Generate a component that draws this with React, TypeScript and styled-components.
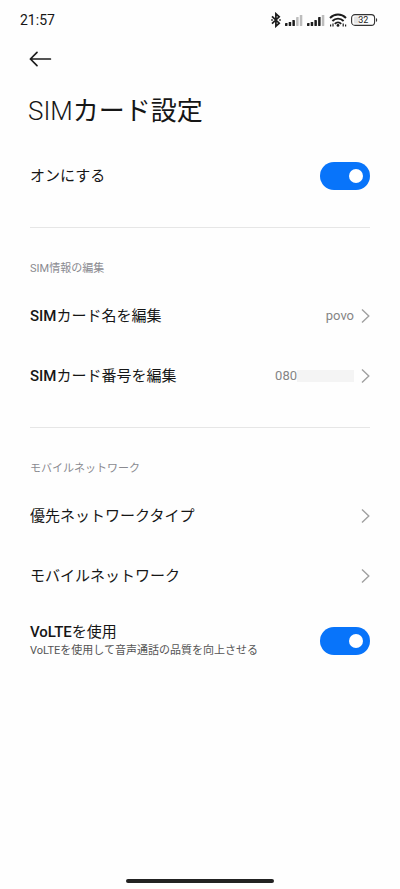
import React, { useState } from 'react';
import styled, { createGlobalStyle } from 'styled-components';

const GlobalStyle = createGlobalStyle`
  * { box-sizing: border-box; }
  body {
    margin: 0;
    background: #fefefe;
    color: #161616;
    font-family: Roboto, "Noto Sans CJK JP", sans-serif;
  }
  button { font: inherit; color: inherit; background: none; border: 0; padding: 0; cursor: pointer; }
`;

const Screen = styled.div`
  min-height: 100vh;
  display: flex;
  flex-direction: column;
`;

const StatusBar = styled.div`
  display: flex;
  align-items: center;
  justify-content: space-between;
  height: 39px;
  padding: 0 22px 0 20px;
`;

const Clock = styled.time`
  font-size: 14px;
  line-height: 20px;
`;

const StatusIcons = styled.div`
  display: flex;
  align-items: center;
  gap: 4px;
  svg { display: block; }
`;

const AppBar = styled.header`
  display: flex;
  align-items: center;
  height: 40px;
  padding: 0 28px;
`;

const BackButton = styled.button`
  display: flex;
`;

const Title = styled.h1`
  margin: 0;
  padding: 12px 28px 15px;
  font-size: 26px;
  line-height: 40px;
  font-weight: 300;
`;

const TitleKana = styled.span`
  font-weight: 400;
`;

const Section = styled.section`
  margin: 0 30px;
  padding-bottom: 21px;
  & + & {
    border-top: 1px solid #e6e6e6;
    padding-top: 31px;
  }
`;

const SectionTitle = styled.h2`
  margin: 0 0 7px;
  font-size: 11px;
  line-height: 20px;
  font-weight: 400;
  color: #8a8a90;
`;

const rowLayout = `
  display: flex;
  align-items: center;
  justify-content: space-between;
  width: 100%;
  text-align: left;
`;

const LinkRow = styled.button`
  ${rowLayout}
  height: 60px;
`;

const SwitchRow = styled.label<{ $tall?: boolean }>`
  ${rowLayout}
  height: ${(p) => (p.$tall ? 69 : 60)}px;
  cursor: pointer;
`;

const RowText = styled.span`
  display: flex;
  flex-direction: column;
`;

const RowLabel = styled.span`
  font-size: 15px;
  line-height: 20px;
`;

const Latin = styled.span`
  font-weight: 500;
`;

const RowNote = styled.span`
  font-size: 11px;
  line-height: 18px;
  color: #555;
`;

const RowEnd = styled.span`
  display: flex;
  align-items: center;
  gap: 7px;
  font-size: 13px;
  line-height: 20px;
  color: #858585;
`;

const PhoneNumber = styled.span`
  display: flex;
  align-items: center;
`;

const HiddenDigits = styled.span`
  width: 57px;
  height: 12px;
  background: #f4f4f4;
`;

const Switch = styled.input`
  appearance: none;
  flex: none;
  display: flex;
  align-items: center;
  width: 50px;
  height: 28px;
  margin: 0;
  padding: 0 7px;
  border-radius: 14px;
  background: #d8d8d8;
  cursor: pointer;
  &::before {
    content: "";
    width: 14px;
    height: 14px;
    border-radius: 50%;
    background: #fff;
  }
  &:checked {
    background: #0874fa;
    justify-content: flex-end;
  }
`;

const HomeArea = styled.div`
  display: flex;
  justify-content: center;
  margin-top: auto;
  padding: 6px 0;
`;

const HomeHandle = styled.span`
  width: 37%;
  height: 4px;
  border-radius: 2px;
  background: #222;
`;

const Bluetooth = () => (
  <svg width="10" height="16" viewBox="0 0 10 16" fill="none" stroke="#1c1c1c" strokeWidth="1.7" aria-hidden="true">
    <path d="M1 4.3 8.2 11.2 4.9 14.2V1.8L8.2 4.8 1 11.7" />
    <path d="M0.2 8h1.6M8.2 8h1.6" />
  </svg>
);

const Signal = ({ level }: { level: number }) => (
  <svg width="18" height="12" viewBox="0 0 18 12" aria-hidden="true">
    {[3, 4, 6, 9, 11].map((h, i) => (
      <rect key={h} x={i * 3.7} y={12 - h} width="2.5" height={h} rx="0.4" fill={i < level ? '#1c1c1c' : '#bdbdbd'} />
    ))}
  </svg>
);

const Wifi = () => (
  <svg width="18" height="14" viewBox="0 0 18 14" fill="none" stroke="#1c1c1c" strokeWidth="1.9" aria-hidden="true">
    <path d="M1 5C5.6 0.4 12.4 0.4 17 5" />
    <path d="M3.4 8c3.2-3.2 8-3.2 11.2 0" />
    <path d="M5.8 10.8c1.9-1.9 4.5-1.9 6.4 0" />
    <circle cx="9" cy="12.4" r="1.4" fill="#1c1c1c" stroke="none" />
    <path d="M1.6 11.6v2M4 10.6v3M14.2 10.6v3M16.6 11.6v2" strokeWidth="1.2" />
  </svg>
);

const Battery = ({ percent }: { percent: number }) => (
  <svg width="27" height="12" viewBox="0 0 27 12" role="img" aria-label={`${percent}%`}>
    <rect x="3" y="2.5" width="6" height="7" rx="1" fill="#e4e4e4" />
    <rect x="0.6" y="0.6" width="23" height="10.8" rx="3.4" fill="none" stroke="#333" strokeWidth="1.1" />
    <path d="M25 4v4c1.6-.6 1.6-3.4 0-4Z" fill="#333" />
    <text x="12.2" y="9.2" textAnchor="middle" fontSize="9" fill="#222">{percent}</text>
  </svg>
);

const BackArrow = () => (
  <svg width="24" height="18" viewBox="0 0 24 18" fill="none" stroke="#1c1c1c" strokeWidth="1.7" strokeLinecap="round" strokeLinejoin="round" aria-hidden="true">
    <path d="M9 2.4 2.4 9 9 15.6M2.4 9h20" />
  </svg>
);

const Chevron = () => (
  <svg width="9" height="16" viewBox="0 0 9 16" fill="none" stroke="#a0a0a0" strokeWidth="1.4" aria-hidden="true">
    <path d="M1 1.4 7.8 8 1 14.6" />
  </svg>
);

export default function App() {
  const [simOn, setSimOn] = useState(true);
  const [volteOn, setVolteOn] = useState(true);

  return (
    <>
      <GlobalStyle />
      <Screen lang="ja">
        <StatusBar>
          <Clock>21:57</Clock>
          <StatusIcons>
            <Bluetooth />
            <Signal level={3} />
            <Signal level={4} />
            <Wifi />
            <Battery percent={32} />
          </StatusIcons>
        </StatusBar>
        <AppBar>
          <BackButton aria-label="戻る"><BackArrow /></BackButton>
        </AppBar>
        <Title>SIM<TitleKana>カード設定</TitleKana></Title>
        <main>
          <Section>
            <SwitchRow>
              <RowLabel>オンにする</RowLabel>
              <Switch type="checkbox" checked={simOn} onChange={(e) => setSimOn(e.target.checked)} />
            </SwitchRow>
          </Section>
          <Section>
            <SectionTitle>SIM情報の編集</SectionTitle>
            <LinkRow>
              <RowLabel><Latin>SIM</Latin>カード名を編集</RowLabel>
              <RowEnd>povo<Chevron /></RowEnd>
            </LinkRow>
            <LinkRow>
              <RowLabel><Latin>SIM</Latin>カード番号を編集</RowLabel>
              <RowEnd><PhoneNumber>080<HiddenDigits /></PhoneNumber><Chevron /></RowEnd>
            </LinkRow>
          </Section>
          <Section>
            <SectionTitle>モバイルネットワーク</SectionTitle>
            <LinkRow>
              <RowLabel>優先ネットワークタイプ</RowLabel>
              <RowEnd><Chevron /></RowEnd>
            </LinkRow>
            <LinkRow>
              <RowLabel>モバイルネットワーク</RowLabel>
              <RowEnd><Chevron /></RowEnd>
            </LinkRow>
            <SwitchRow $tall>
              <RowText>
                <RowLabel><Latin>VoLTE</Latin>を使用</RowLabel>
                <RowNote>VoLTEを使用して音声通話の品質を向上させる</RowNote>
              </RowText>
              <Switch type="checkbox" checked={volteOn} onChange={(e) => setVolteOn(e.target.checked)} />
            </SwitchRow>
          </Section>
        </main>
        <HomeArea><HomeHandle /></HomeArea>
      </Screen>
    </>
  );
}
